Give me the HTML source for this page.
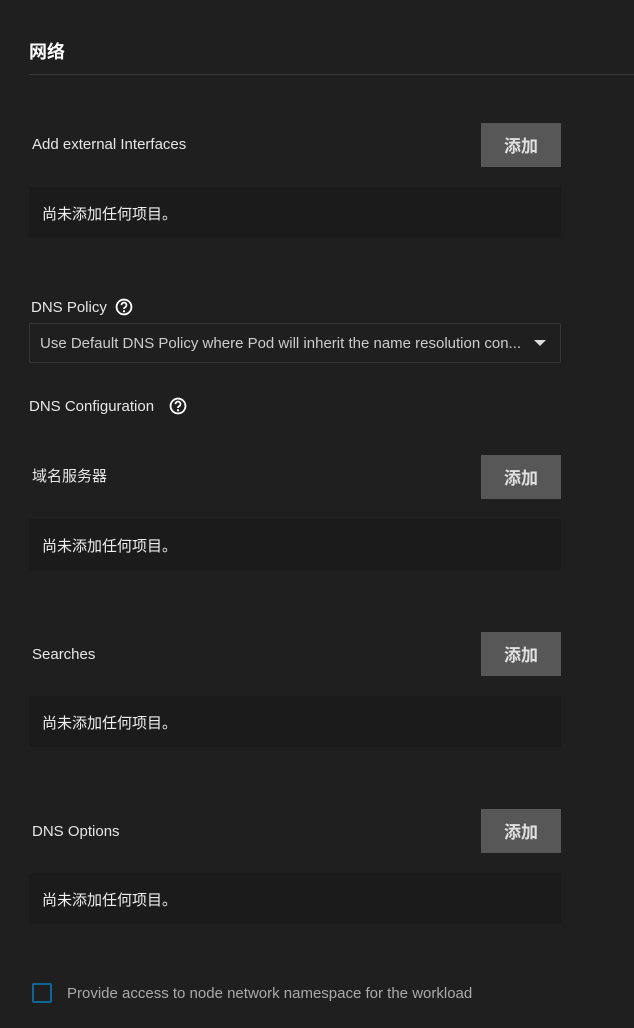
<!DOCTYPE html>
<html><head><meta charset="utf-8"><style>
*{margin:0;padding:0;box-sizing:border-box}
body{width:634px;height:1028px;background:#1f1f1f;position:relative;overflow:hidden;font-family:"Liberation Sans","Noto Sans CJK SC",sans-serif;color:#e6e6e6}
.a{position:absolute}
.t{font-size:15px;line-height:16px;color:#e6e6e6;white-space:nowrap}
.btn{position:absolute;left:481px;width:80px;height:44px;background:#575757;color:#e0e0e0;font-weight:bold;font-size:17px;display:flex;align-items:center;justify-content:center;padding-bottom:2px}
.box{position:absolute;left:29px;width:532px;height:51px;background:#1b1b1b;font-size:15px;padding-left:13px;padding-top:2px;display:flex;align-items:center;color:#eee}
.q{position:absolute;width:18px;height:18px}
</style></head><body>
<div class="a" style="left:29px;top:40px;font-size:18px;font-weight:bold;color:#fff;line-height:24px">网络</div>
<div class="a" style="left:29px;top:74px;width:605px;height:1px;background:#383838"></div>

<div class="a t" style="left:32px;top:137px">Add external Interfaces</div>
<div class="btn" style="top:123px">添加</div>
<div class="box" style="top:187px">尚未添加任何项目。</div>

<div class="a t" style="left:31px;top:300px">DNS Policy</div>
<svg class="q" style="left:115px;top:298px" viewBox="0 0 16 16"><circle cx="8" cy="8" r="6.6" fill="none" stroke="#fff" stroke-width="1.6"/><path d="M5.8 6.3a2.2 2.2 0 1 1 3.2 1.9c-.7.4-1 .8-1 1.6" fill="none" stroke="#fff" stroke-width="1.6"/><circle cx="8" cy="11.8" r="1" fill="#fff"/></svg>
<div class="a" style="left:29px;top:323px;width:532px;height:40px;border:1px solid #353535;border-radius:2px"></div>
<div class="a t" style="left:40px;top:336px;color:#ccc">Use Default DNS Policy where Pod will inherit the name resolution con...</div>
<div class="a" style="left:534px;top:340px;width:0;height:0;border-left:6px solid transparent;border-right:6px solid transparent;border-top:6px solid #ddd"></div>

<div class="a t" style="left:29px;top:399px">DNS Configuration</div>
<svg class="q" style="left:169px;top:397px" viewBox="0 0 16 16"><circle cx="8" cy="8" r="6.6" fill="none" stroke="#fff" stroke-width="1.6"/><path d="M5.8 6.3a2.2 2.2 0 1 1 3.2 1.9c-.7.4-1 .8-1 1.6" fill="none" stroke="#fff" stroke-width="1.6"/><circle cx="8" cy="11.8" r="1" fill="#fff"/></svg>

<div class="a t" style="left:32px;top:469px">域名服务器</div>
<div class="btn" style="top:455px">添加</div>
<div class="box" style="top:519px">尚未添加任何项目。</div>

<div class="a t" style="left:32px;top:647px">Searches</div>
<div class="btn" style="top:632px">添加</div>
<div class="box" style="top:696px">尚未添加任何项目。</div>

<div class="a t" style="left:32px;top:824px">DNS Options</div>
<div class="btn" style="top:809px">添加</div>
<div class="box" style="top:873px">尚未添加任何项目。</div>

<div class="a" style="left:32px;top:983px;width:20px;height:20px;border:2px solid #0c6696;border-radius:2px"></div>
<div class="a t" style="left:67px;top:986px;color:#aaa">Provide access to node network namespace for the workload</div>
</body></html>
